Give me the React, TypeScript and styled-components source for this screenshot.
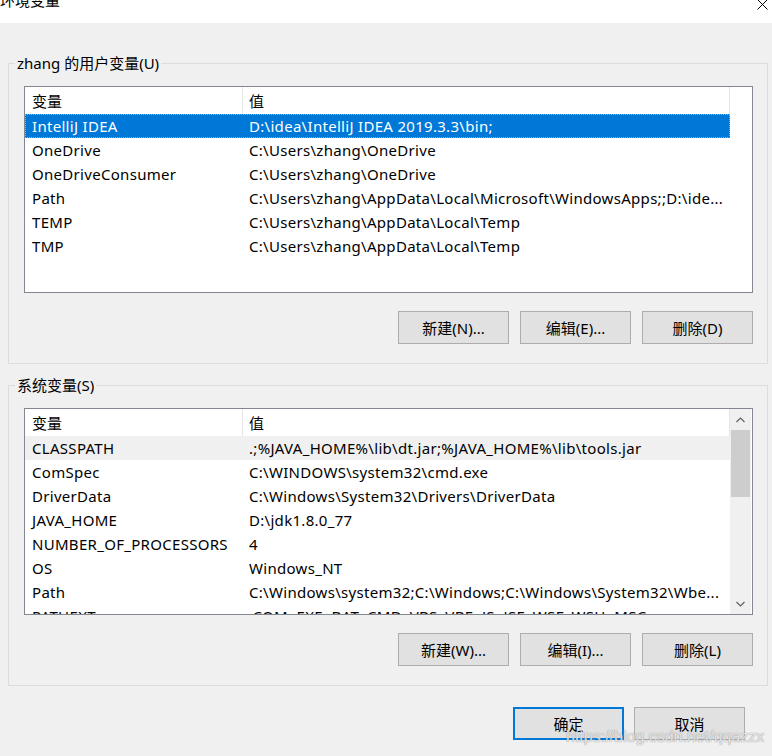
import React from 'react'
import styled, { createGlobalStyle } from 'styled-components'

const GlobalStyle = createGlobalStyle`
  html, body {
    margin: 0;
    padding: 0;
    background: #f0f0f0;
  }
  body {
    font-family: 'Noto Sans', 'Noto Sans CJK SC', sans-serif;
    font-size: 15px;
    color: #000;
  }
`

const Window = styled.div`
  position: relative;
  width: 772px;
  height: 756px;
  overflow: hidden;
  display: flex;
  flex-direction: column;
  background: #f0f0f0;
`
const TitleBar = styled.div`
  height: 23px;
  flex: none;
  background: #fff;
  display: flex;
  justify-content: space-between;
  align-items: flex-start;
  overflow: hidden;
`
const TitleText = styled.div`
  margin-top: -10px;
  font-size: 15px;
  line-height: 20px;
`
const CloseIcon = styled.svg`
  margin: -1px 4px 0 0;
`
const Body = styled.div`
  padding: 30px 4px 0 8px;
  display: flex;
  flex-direction: column;
`
const Group = styled.fieldset<{ $gap?: number }>`
  margin: ${(p) => p.$gap ?? 0}px 0 0 0;
  width: 760px;
  box-sizing: border-box;
  border: 1px solid #dcdcdc;
  padding: 13px 14px 19px 15px;
  min-width: 0;
`
const Legend = styled.legend`
  margin-left: -9px;
  padding: 0 2px;
  line-height: 20px;
  font-size: 15px;
`
const ListView = styled.div`
  height: 207px;
  box-sizing: border-box;
  border: 1px solid #828790;
  background: #fff;
  display: flex;
  overflow: hidden;
`
const ListContent = styled.div`
  width: 705px;
  flex: none;
  display: flex;
  flex-direction: column;
  overflow: hidden;
`
const HeaderRow = styled.div`
  height: 27px;
  flex: none;
  display: flex;
  align-items: stretch;
`
const HeaderCell = styled.div<{ $w: number }>`
  width: ${(p) => p.$w}px;
  flex: none;
  box-sizing: border-box;
  padding-left: ${(p) => (p.$w > 300 ? 6 : 7)}px;
  border-right: 1px solid #e5e5e5;
  display: flex;
  align-items: center;
`
const Row = styled.div<{ $state?: 'active' | 'inactive' }>`
  height: 24px;
  flex: none;
  display: flex;
  align-items: center;
  box-sizing: border-box;
  background: ${(p) =>
    p.$state === 'active' ? '#0078d7' : p.$state === 'inactive' ? '#f0f0f0' : 'transparent'};
  color: ${(p) => (p.$state === 'active' ? '#fff' : '#000')};
  outline: ${(p) => (p.$state === 'active' ? '1px dotted #e8a050' : 'none')};
  outline-offset: -1px;
`
const Cell = styled.div<{ $w: number }>`
  width: ${(p) => p.$w}px;
  flex: none;
  box-sizing: border-box;
  padding-left: ${(p) => (p.$w > 300 ? 6 : 7)}px;
  padding-right: 4px;
  white-space: nowrap;
  overflow: hidden;
  line-height: 24px;
  letter-spacing: 0.3px;
`
const ScrollBar = styled.div`
  width: 21px;
  flex: none;
  background: #f0f0f0;
  display: flex;
  flex-direction: column;
  align-items: center;
`
const ScrollArrow = styled.div`
  height: 21px;
  width: 21px;
  flex: none;
  display: flex;
  align-items: center;
  justify-content: center;
`
const ScrollTrack = styled.div`
  flex: 1;
  width: 100%;
  display: flex;
  flex-direction: column;
  align-items: center;
`
const ScrollThumb = styled.div`
  width: 19px;
  height: 67px;
  background: #cdcdcd;
`
const ButtonRow = styled.div`
  display: flex;
  justify-content: flex-end;
  gap: 11px;
  margin-top: 18px;
`
const Button = styled.div<{ $default?: boolean }>`
  width: 111px;
  height: 33px;
  box-sizing: border-box;
  background: #e1e1e1;
  border: ${(p) => (p.$default ? '2px solid #0078d7' : '1px solid #adadad')};
  display: flex;
  align-items: center;
  justify-content: center;
  font-size: 15px;
`
const Footer = styled.div`
  display: flex;
  justify-content: flex-end;
  gap: 10px;
  padding-right: 23px;
  margin-top: 21px;
`
const Watermark = styled.div`
  position: absolute;
  left: 566px;
  top: 728px;
  font-family: 'Liberation Sans', Arial, sans-serif;
  font-size: 16px;
  color: rgba(255, 255, 255, 0.75);
  text-shadow: 0 0 1px rgba(120, 120, 120, 0.6), 0 0 1px rgba(120, 120, 120, 0.6);
  pointer-events: none;
`

type Variable = [string, string]

const userVars: Variable[] = [
  ['IntelliJ IDEA', 'D:\\idea\\IntelliJ IDEA 2019.3.3\\bin;'],
  ['OneDrive', 'C:\\Users\\zhang\\OneDrive'],
  ['OneDriveConsumer', 'C:\\Users\\zhang\\OneDrive'],
  ['Path', 'C:\\Users\\zhang\\AppData\\Local\\Microsoft\\WindowsApps;;D:\\ide...'],
  ['TEMP', 'C:\\Users\\zhang\\AppData\\Local\\Temp'],
  ['TMP', 'C:\\Users\\zhang\\AppData\\Local\\Temp'],
]

const systemVars: Variable[] = [
  ['CLASSPATH', '.;%JAVA_HOME%\\lib\\dt.jar;%JAVA_HOME%\\lib\\tools.jar'],
  ['ComSpec', 'C:\\WINDOWS\\system32\\cmd.exe'],
  ['DriverData', 'C:\\Windows\\System32\\Drivers\\DriverData'],
  ['JAVA_HOME', 'D:\\jdk1.8.0_77'],
  ['NUMBER_OF_PROCESSORS', '4'],
  ['OS', 'Windows_NT'],
  ['Path', 'C:\\Windows\\system32;C:\\Windows;C:\\Windows\\System32\\Wbe...'],
  ['PATHEXT', '.COM;.EXE;.BAT;.CMD;.VBS;.VBE;.JS;.JSE;.WSF;.WSH;.MSC'],
]

const COL1 = 218
const COL2 = 487

const Chevron = ({ up }: { up?: boolean }) => (
  <svg width="9" height="6" viewBox="0 0 9 6">
    <path
      d={up ? 'M0.5 5 L4.5 1 L8.5 5' : 'M0.5 1 L4.5 5 L8.5 1'}
      fill="none"
      stroke="#606060"
      strokeWidth="1.2"
    />
  </svg>
)

const VarList = ({
  vars,
  selected,
  focused,
  scroll,
}: {
  vars: Variable[]
  selected: number
  focused: boolean
  scroll?: boolean
}) => (
  <ListView>
    <ListContent>
      <HeaderRow>
        <HeaderCell $w={COL1}>变量</HeaderCell>
        <HeaderCell $w={COL2}>值</HeaderCell>
      </HeaderRow>
      {vars.map(([name, value], i) => (
        <Row
          key={name + i}
          $state={i === selected ? (focused ? 'active' : 'inactive') : undefined}
        >
          <Cell $w={COL1}>{name}</Cell>
          <Cell $w={COL2}>{value}</Cell>
        </Row>
      ))}
    </ListContent>
    {scroll && (
      <ScrollBar>
        <ScrollArrow>
          <Chevron up />
        </ScrollArrow>
        <ScrollTrack>
          <ScrollThumb />
        </ScrollTrack>
        <ScrollArrow>
          <Chevron />
        </ScrollArrow>
      </ScrollBar>
    )}
  </ListView>
)

export default function App() {
  return (
    <Window>
      <GlobalStyle />
      <TitleBar>
        <TitleText>环境变量</TitleText>
        <CloseIcon width="11" height="11" viewBox="0 0 11 11">
          <path d="M0.5 0.5 L10.5 10.5 M10.5 0.5 L0.5 10.5" stroke="#000" strokeWidth="1" />
        </CloseIcon>
      </TitleBar>
      <Body>
        <Group>
          <Legend>zhang 的用户变量(U)</Legend>
          <VarList vars={userVars} selected={0} focused />
          <ButtonRow>
            <Button>新建(N)...</Button>
            <Button>编辑(E)...</Button>
            <Button>删除(D)</Button>
          </ButtonRow>
        </Group>
        <Group $gap={11}>
          <Legend>系统变量(S)</Legend>
          <VarList vars={systemVars} selected={0} focused={false} scroll />
          <ButtonRow>
            <Button>新建(W)...</Button>
            <Button>编辑(I)...</Button>
            <Button>删除(L)</Button>
          </ButtonRow>
        </Group>
        <Footer>
          <Button $default>确定</Button>
          <Button>取消</Button>
        </Footer>
      </Body>
      <Watermark>https://blog.csdn.net/qqazzx</Watermark>
    </Window>
  )
}
